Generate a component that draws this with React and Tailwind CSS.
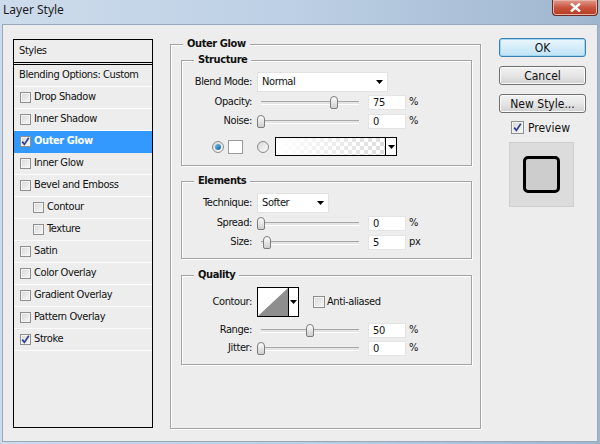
import React from "react";

const styleRows = [
  { label: "Drop Shadow" },
  { label: "Inner Shadow" },
  { label: "Outer Glow", checked: true, active: true },
  { label: "Inner Glow" },
  { label: "Bevel and Emboss" },
  { label: "Contour", indent: true },
  { label: "Texture", indent: true },
  { label: "Satin" },
  { label: "Color Overlay" },
  { label: "Gradient Overlay" },
  { label: "Pattern Overlay" },
  { label: "Stroke", checked: true },
];

const CheckMark = () => (
  <svg width="9" height="9" viewBox="0 0 9 9">
    <path d="M1.2 4.6 L3.4 7.4 L7.8 0.8" fill="none" stroke="#2f3f8f" strokeWidth="1.7" />
  </svg>
);

const Check = ({ checked, size = "h-[11px] w-[11px]" }) => (
  <span
    className={`flex ${size} shrink-0 items-center justify-center border border-[#8f8f8f] bg-gradient-to-br from-[#d8d8d8] to-[#f7f7f7] shadow-[inset_0_0_0_1px_#f4f4f4]`}
  >
    {checked && <CheckMark />}
  </span>
);

const Arrow = () => (
  <svg width="7" height="4" viewBox="0 0 7 4">
    <path d="M0 0 H7 L3.5 4 Z" fill="#000" />
  </svg>
);

const Group = ({ title, className = "", children }) => (
  <div
    className={`relative border border-[#a3a3a3] shadow-[inset_1px_1px_0_#fff,1px_1px_0_#fff] ${className}`}
  >
    <span className="absolute -top-[8px] left-[12px] bg-[#ededed] px-[4px] font-bold leading-[14px]">
      {title}
    </span>
    {children}
  </div>
);

const Field = ({ value, className = "" }) => (
  <div
    className={`flex h-[15px] w-[38px] items-center border border-[#e4e4e4] bg-white pl-[4px] leading-none ${className}`}
  >
    {value}
  </div>
);

const SliderRow = ({ label, thumb, value, unit, className = "" }) => (
  <div className={`flex h-[15px] items-center ${className}`}>
    <span className="w-[70px] text-right">{label}</span>
    <div className="relative ml-[9px] h-[15px] w-[98px]">
      <div className="absolute left-0 right-0 top-[6px] h-[3px] border-t border-[#a8a8a8] bg-[#e4e4e4] shadow-[0_1px_0_#fff]" />
      <div
        className="absolute top-[1px] h-[13px] w-[8px] rounded-t-[4px] rounded-b-[2px] border border-[#7c7c7c] bg-gradient-to-b from-[#fdfdfd] to-[#cfcfcf]"
        style={{ left: thumb }}
      />
    </div>
    <Field value={value} className="ml-[9px]" />
    <span className="ml-[3px]">{unit}</span>
  </div>
);

const Select = ({ value, className = "" }) => (
  <div
    className={`flex h-[20px] items-center justify-between border border-[#e2e2e2] bg-white pl-[4px] pr-[4px] ${className}`}
  >
    <span>{value}</span>
    <Arrow />
  </div>
);

const Radio = ({ on }) => (
  <span className="flex h-[12px] w-[12px] shrink-0 items-center justify-center rounded-full border border-[#8a8a8a] bg-gradient-to-br from-[#d9d9d9] to-[#fafafa]">
    {on && (
      <span className="h-[6px] w-[6px] rounded-full bg-gradient-to-br from-[#6fc3f0] to-[#0d5f9c]" />
    )}
  </span>
);

const Button = ({ children, primary }) => (
  <div
    className={`flex h-[19px] w-[87px] items-center justify-center rounded-[3px] border text-[12px] tracking-normal ${
      primary
        ? "border-[#3c7fb1] bg-gradient-to-b from-[#eaf6fd] to-[#bfe3f6] shadow-[inset_0_0_0_1px_#9fd5f2]"
        : "border-[#707070] bg-gradient-to-b from-[#f2f2f2] via-[#e6e6e6] to-[#d1d1d1] shadow-[inset_0_0_0_1px_#fbfbfb]"
    }`}
  >
    {children}
  </div>
);

export default function App() {
  return (
    <div className="h-[444px] w-[600px] overflow-hidden bg-gradient-to-r from-[#cddcec] via-[#bccfe4] to-[#9fb6cf] font-['Tahoma','DejaVu_Sans_Condensed','DejaVu_Sans',sans-serif] text-[11px] tracking-[-0.4px] text-[#111]">
      {/* title bar */}
      <div className="relative flex h-[24px] items-start">
        <span className="pl-[3px] pt-[2px] font-['Noto_Sans',sans-serif] text-[12px] leading-[16px] tracking-normal text-[#1b1b1b]">
          Layer Style
        </span>
        <div className="absolute right-[2px] top-0 flex h-[16px] w-[46px] items-center justify-center rounded-b-[4px] border border-t-0 border-[#6b2a22] bg-gradient-to-b from-[#e19a8c] via-[#c8553f] to-[#b53a22] shadow-[inset_0_0_0_1px_#e9b2a6]">
          <svg width="11" height="9" viewBox="0 0 11 9">
            <path d="M1 0.5 L10 8.5 M10 0.5 L1 8.5" stroke="#fff" strokeWidth="2.4" />
          </svg>
        </div>
      </div>

      {/* client */}
      <div className="ml-[2px] h-[418px] w-[596px] border border-[#98a9bc] bg-[#ededed]">
        <div className="flex items-start pl-[10px] pt-[13px]">
          {/* styles list */}
          <div className="mt-[1px] flex h-[389px] w-[140px] flex-col border border-black">
            <div className="flex h-[23px] items-center border-b border-black pl-[5px]">Styles</div>
            <div className="mt-[1px] flex-1 border-t border-black">
              <div className="flex h-[22px] items-center border-b border-[#fbfbfb] pl-[5px]">
                Blending Options: Custom
              </div>
              {styleRows.map((r) => (
                <div
                  key={r.label}
                  className={`flex h-[22px] items-center gap-[3px] border-b ${
                    r.active
                      ? "border-[#3399ff] bg-[#3399ff] font-bold text-white"
                      : "border-[#fbfbfb]"
                  } ${r.indent ? "pl-[19px]" : "pl-[6px]"}`}
                >
                  <Check checked={r.checked} />
                  <span>{r.label}</span>
                </div>
              ))}
            </div>
          </div>

          {/* outer glow settings */}
          <Group title="Outer Glow" className="ml-[17px] mt-[6px] h-[385px] w-[311px] pl-[10px] pr-[8px] pt-[15px]">
            <Group title="Structure" className="h-[106px] pt-[11px]">
              <div className="flex h-[20px] items-center">
                <span className="w-[70px] text-right">Blend Mode:</span>
                <Select value="Normal" className="ml-[5px] w-[131px]" />
              </div>
              <SliderRow label="Opacity:" thumb={69} value="75" unit="%" className="mt-[3px]" />
              <SliderRow label="Noise:" thumb={-4} value="0" unit="%" className="mt-[4px]" />
              <div className="mt-[8px] flex h-[19px] items-center pl-[30px]">
                <Radio on />
                <span className="ml-[4px] h-[14px] w-[15px] border border-[#9a9a9a] bg-white" />
                <span className="ml-[14px]">
                  <Radio />
                </span>
                <div className="ml-[6px] flex h-[19px] w-[122px] border border-black">
                  <div className="flex-1 bg-[linear-gradient(90deg,#ffffff_0%,rgba(255,255,255,0.2)_100%),repeating-conic-gradient(#d4d4d4_0%_25%,#ffffff_0%_50%)] bg-[length:100%_100%,8px_8px]" />
                  <div className="flex w-[11px] items-center justify-center border-l border-black bg-white">
                    <Arrow />
                  </div>
                </div>
              </div>
            </Group>

            <Group title="Elements" className="mt-[15px] h-[78px] pt-[11px]">
              <div className="flex h-[20px] items-center">
                <span className="w-[70px] text-right">Technique:</span>
                <Select value="Softer" className="ml-[5px] w-[72px]" />
              </div>
              <SliderRow label="Spread:" thumb={-4} value="0" unit="%" className="mt-[3px]" />
              <SliderRow label="Size:" thumb={2} value="5" unit="px" className="mt-[4px]" />
            </Group>

            <Group title="Quality" className="mt-[16px] h-[90px] pt-[11px]">
              <div className="flex h-[30px] items-center">
                <span className="w-[70px] text-right">Contour:</span>
                <div className="ml-[5px] flex h-[30px] w-[42px] border border-black bg-white">
                  <svg width="30" height="28" viewBox="0 0 30 28" className="shrink-0">
                    <path d="M0 28 L30 0 L30 28 Z" fill="#8e8e8e" />
                  </svg>
                  <div className="flex flex-1 items-center justify-center border-l border-black">
                    <Arrow />
                  </div>
                </div>
                <span className="ml-[14px]">
                  <Check size="h-[12px] w-[12px]" />
                </span>
                <span className="ml-[2px]">Anti-aliased</span>
              </div>
              <SliderRow label="Range:" thumb={45} value="50" unit="%" className="mt-[6px]" />
              <SliderRow label="Jitter:" thumb={-4} value="0" unit="%" className="mt-[3px]" />
            </Group>
          </Group>

          {/* buttons */}
          <div className="ml-[18px] flex w-[87px] flex-col">
            <Button primary>OK</Button>
            <div className="mt-[9px]">
              <Button>Cancel</Button>
            </div>
            <div className="mt-[9px]">
              <Button>New Style...</Button>
            </div>
            <div className="mt-[8px] flex h-[13px] items-center gap-[4px] pl-[12px] text-[12px] tracking-normal">
              <Check checked size="h-[13px] w-[13px]" />
              <span>Preview</span>
            </div>
            <div className="ml-[10px] mt-[8px] flex h-[65px] w-[65px] items-center justify-center border border-[#cfcfcf] bg-[#dcdcdc]">
              <div className="h-[37px] w-[37px] rounded-[5px] border-[3px] border-black bg-[#cdcdcd]" />
            </div>
          </div>
        </div>
      </div>
    </div>
  );
}
